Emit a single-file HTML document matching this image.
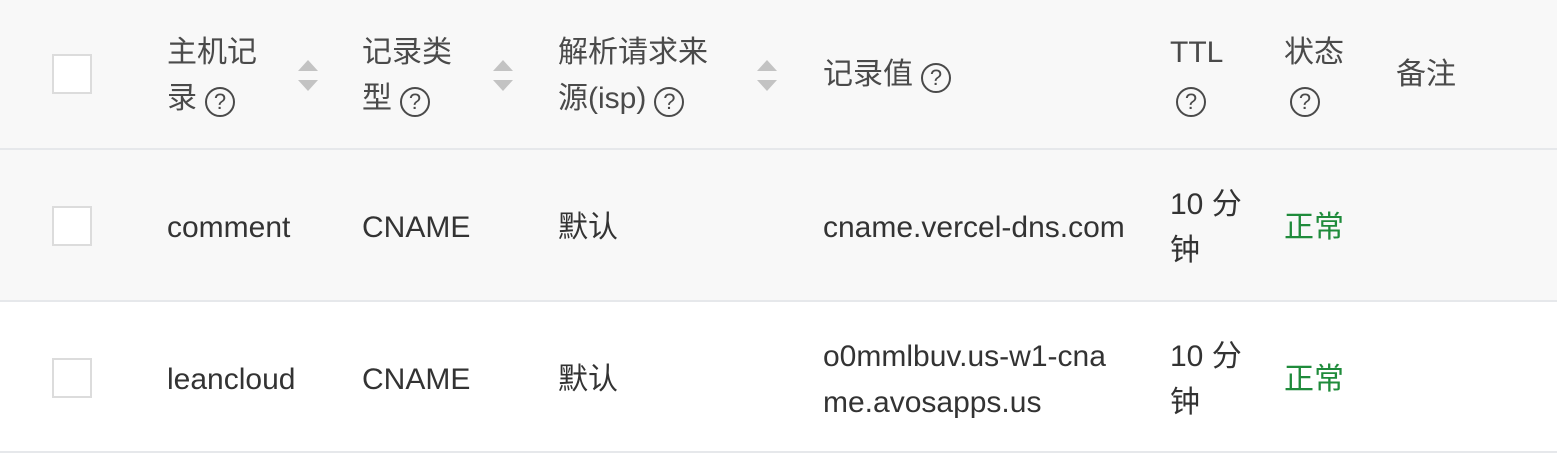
<!DOCTYPE html>
<html><head><meta charset="utf-8"><style>
body{margin:0;width:1557px;height:453px;overflow:hidden;background:#fff;font-family:"Liberation Sans","Noto Sans CJK SC",sans-serif;font-size:30px;color:#333;position:relative}
.a{position:absolute;line-height:46px;white-space:nowrap}
.h{color:#4a4a4a}
.cb{position:absolute;left:52px;width:36px;height:36px;border:2px solid #dcdcdc;background:#fff}
.q{display:inline-block;width:26px;height:26px;border:2.5px solid #4a4a4a;border-radius:50%;font-size:22px;line-height:26px;text-align:center;vertical-align:-1px;margin-left:8px;color:#4a4a4a}
.s{position:absolute;width:0;height:0;border-left:10px solid transparent;border-right:10px solid transparent}
.up{border-bottom:11px solid #c3c3c3}
.dn{border-top:11px solid #c3c3c3}
.g{color:#1f8b3b}
</style></head><body>
<div style="position:absolute;left:0;top:0;width:1557px;height:148px;background:#f8f8f8;border-bottom:2px solid #e6e8eb"></div>
<div style="position:absolute;left:0;top:150px;width:1557px;height:150px;background:#f8f8f8;border-bottom:2px solid #e6e8eb"></div>
<div style="position:absolute;left:0;top:302px;width:1557px;height:149px;background:#fff;border-bottom:2px solid #e6e8eb"></div>

<div class="cb" style="top:54px"></div>
<div class="cb" style="top:206px"></div>
<div class="cb" style="top:358px"></div>

<div class="a h" style="left:167px;top:30px">主机记<br>录<span class="q">?</span></div>
<div class="s up" style="left:298px;top:60px"></div><div class="s dn" style="left:298px;top:80px"></div>
<div class="a h" style="left:362px;top:30px">记录类<br>型<span class="q">?</span></div>
<div class="s up" style="left:493px;top:60px"></div><div class="s dn" style="left:493px;top:80px"></div>
<div class="a h" style="left:558px;top:30px">解析请求来<br>源(isp)<span class="q">?</span></div>
<div class="s up" style="left:757px;top:60px"></div><div class="s dn" style="left:757px;top:80px"></div>
<div class="a h" style="left:823px;top:52px">记录值<span class="q">?</span></div>
<div class="a h" style="left:1170px;top:30px">TTL<br><span class="q" style="margin-left:6px">?</span></div>
<div class="a h" style="left:1284px;top:30px">状态<br><span class="q" style="margin-left:6px">?</span></div>
<div class="a h" style="left:1396px;top:52px">备注</div>

<div class="a" style="left:167px;top:205px">comment</div>
<div class="a" style="left:362px;top:205px">CNAME</div>
<div class="a" style="left:558px;top:205px">默认</div>
<div class="a" style="left:823px;top:205px">cname.vercel-dns.com</div>
<div class="a" style="left:1170px;top:182px">10 分<br>钟</div>
<div class="a g" style="left:1284px;top:205px">正常</div>

<div class="a" style="left:167px;top:357px">leancloud</div>
<div class="a" style="left:362px;top:357px">CNAME</div>
<div class="a" style="left:558px;top:357px">默认</div>
<div class="a" style="left:823px;top:334px">o0mmlbuv.us-w1-cna<br>me.avosapps.us</div>
<div class="a" style="left:1170px;top:334px">10 分<br>钟</div>
<div class="a g" style="left:1284px;top:357px">正常</div>
</body></html>
